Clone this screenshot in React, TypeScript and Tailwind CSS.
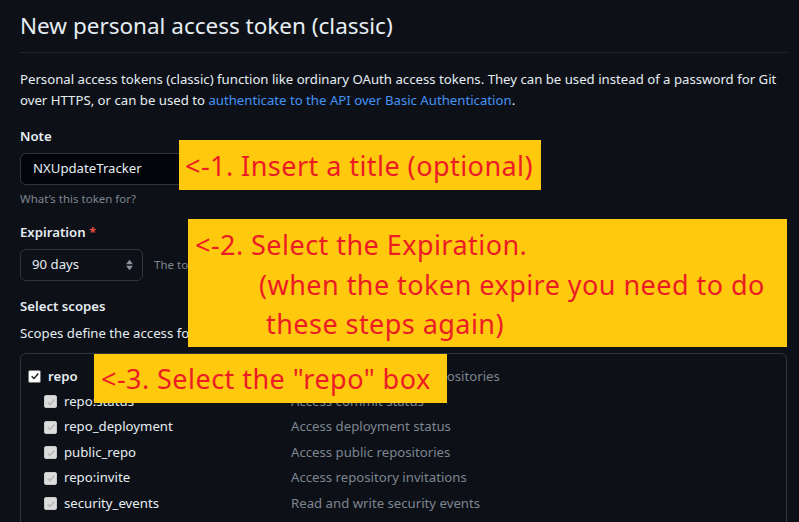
import React from "react";

const scopes = [
  { name: "repo:status", desc: "Access commit status" },
  { name: "repo_deployment", desc: "Access deployment status" },
  { name: "public_repo", desc: "Access public repositories" },
  { name: "repo:invite", desc: "Access repository invitations" },
  { name: "security_events", desc: "Read and write security events" },
];

const Check = ({ disabled }: { disabled?: boolean }) => (
  <span
    className={`flex h-[13px] w-[13px] shrink-0 items-center justify-center rounded-[2px] border ${
      disabled ? "border-[#c8c8c8] bg-[#dcdcdc]" : "border-[#767676] bg-white"
    }`}
  >
    <svg viewBox="0 0 12 12" className="h-[10px] w-[10px]">
      <path
        d="M2 6.2 L4.8 9 L10 3"
        fill="none"
        stroke={disabled ? "#b4b4b4" : "#1b1b1b"}
        strokeWidth="1.6"
      />
    </svg>
  </span>
);

const Note = ({ className, children }: { className: string; children: React.ReactNode }) => (
  <div
    className={`absolute bg-[#ffc90e] text-[#ed1c24] font-['Noto_Sans',sans-serif] text-[27px] tracking-[0.45px] whitespace-nowrap ${className}`}
  >
    {children}
  </div>
);

export default function App() {
  return (
    <div className="relative w-[799px] h-[522px] overflow-hidden bg-[#0d1117] px-5 font-['Noto_Sans',sans-serif] text-[13.2px] text-[#e6edf3]">
      <h1 className="border-b border-[#21262d] pt-2 pb-2 text-[22.5px] leading-[36px] w-[767px]">
        New personal access token (classic)
      </h1>

      <p className="mt-4 whitespace-nowrap leading-[21px]">
        Personal access tokens (classic) function like ordinary OAuth access tokens. They can be used instead of a password for Git
        <br />
        over HTTPS, or can be used to{" "}
        <a className="text-[#4493f8]">authenticate to the API over Basic Authentication</a>.
      </p>

      <div className="mt-[15px] font-semibold leading-[21px]">Note</div>
      <div className="mt-[6px] flex h-8 w-[300px] items-center rounded-md border border-[#30363d] bg-[#010409] px-[12px]">
        NXUpdateTracker
      </div>
      <div className="mt-[5px] text-[11.5px] leading-[18px] text-[#7d8590]">What’s this token for?</div>

      <div className="mt-[14px] font-semibold leading-[21px]">
        Expiration <span className="text-[#f85149]">*</span>
      </div>
      <div className="mt-[6px] flex items-center gap-[11px]">
        <div className="flex h-8 w-[123px] items-center justify-between rounded-md border border-[#30363d] pl-[11px] pr-[8px]">
          <span>90 days</span>
          <svg viewBox="0 0 10 14" className="h-[12px] w-[9px]">
            <path d="M5 1 L9 6 H1 Z M1 8 H9 L5 13 Z" fill="#8b949e" />
          </svg>
        </div>
        <span className="text-[11.5px] text-[#7d8590]">The token will expire on Sat, Mar 16 2024</span>
      </div>

      <div className="mt-[15px] font-semibold leading-[21px]">Select scopes</div>
      <div className="mt-[6px] leading-[21px]">
        Scopes define the access for personal tokens. Read more about OAuth scopes.
      </div>

      <div className="mt-[9px] w-[767px] rounded-md border border-[#30363d] pt-[10px] pb-4 pl-[7px]">
        <div className="grid h-[25px] grid-cols-[263px_1fr] items-center">
          <label className="flex items-center gap-[7px] font-semibold">
            <Check />
            repo
          </label>
          <span className="text-[#7d8590]">Full control of private repositories</span>
        </div>
        {scopes.map((s) => (
          <div key={s.name} className="grid h-[25.5px] grid-cols-[263px_1fr] items-center">
            <label className="flex items-center gap-[7px] pl-4">
              <Check disabled />
              {s.name}
            </label>
            <span className="text-[#7d8590]">{s.desc}</span>
          </div>
        ))}
      </div>

      <Note className="left-[179px] top-[140px] flex h-[50px] w-[362px] items-center pl-[6px] leading-none">
        &lt;-1. Insert a title (optional)
      </Note>
      <Note className="left-[188px] top-[219px] h-[128px] w-[599px] pl-[7px] pt-[6px] leading-[39.5px]">
        <div>&lt;-2. Select the Expiration.</div>
        <div className="pl-[64px]">(when the token expire you need to do</div>
        <div className="pl-[71px]">these steps again)</div>
      </Note>
      <Note className="left-[94px] top-[354px] flex h-[49px] w-[353px] items-center pl-[7px] leading-none">
        &lt;-3. Select the "repo" box
      </Note>
    </div>
  );
}
